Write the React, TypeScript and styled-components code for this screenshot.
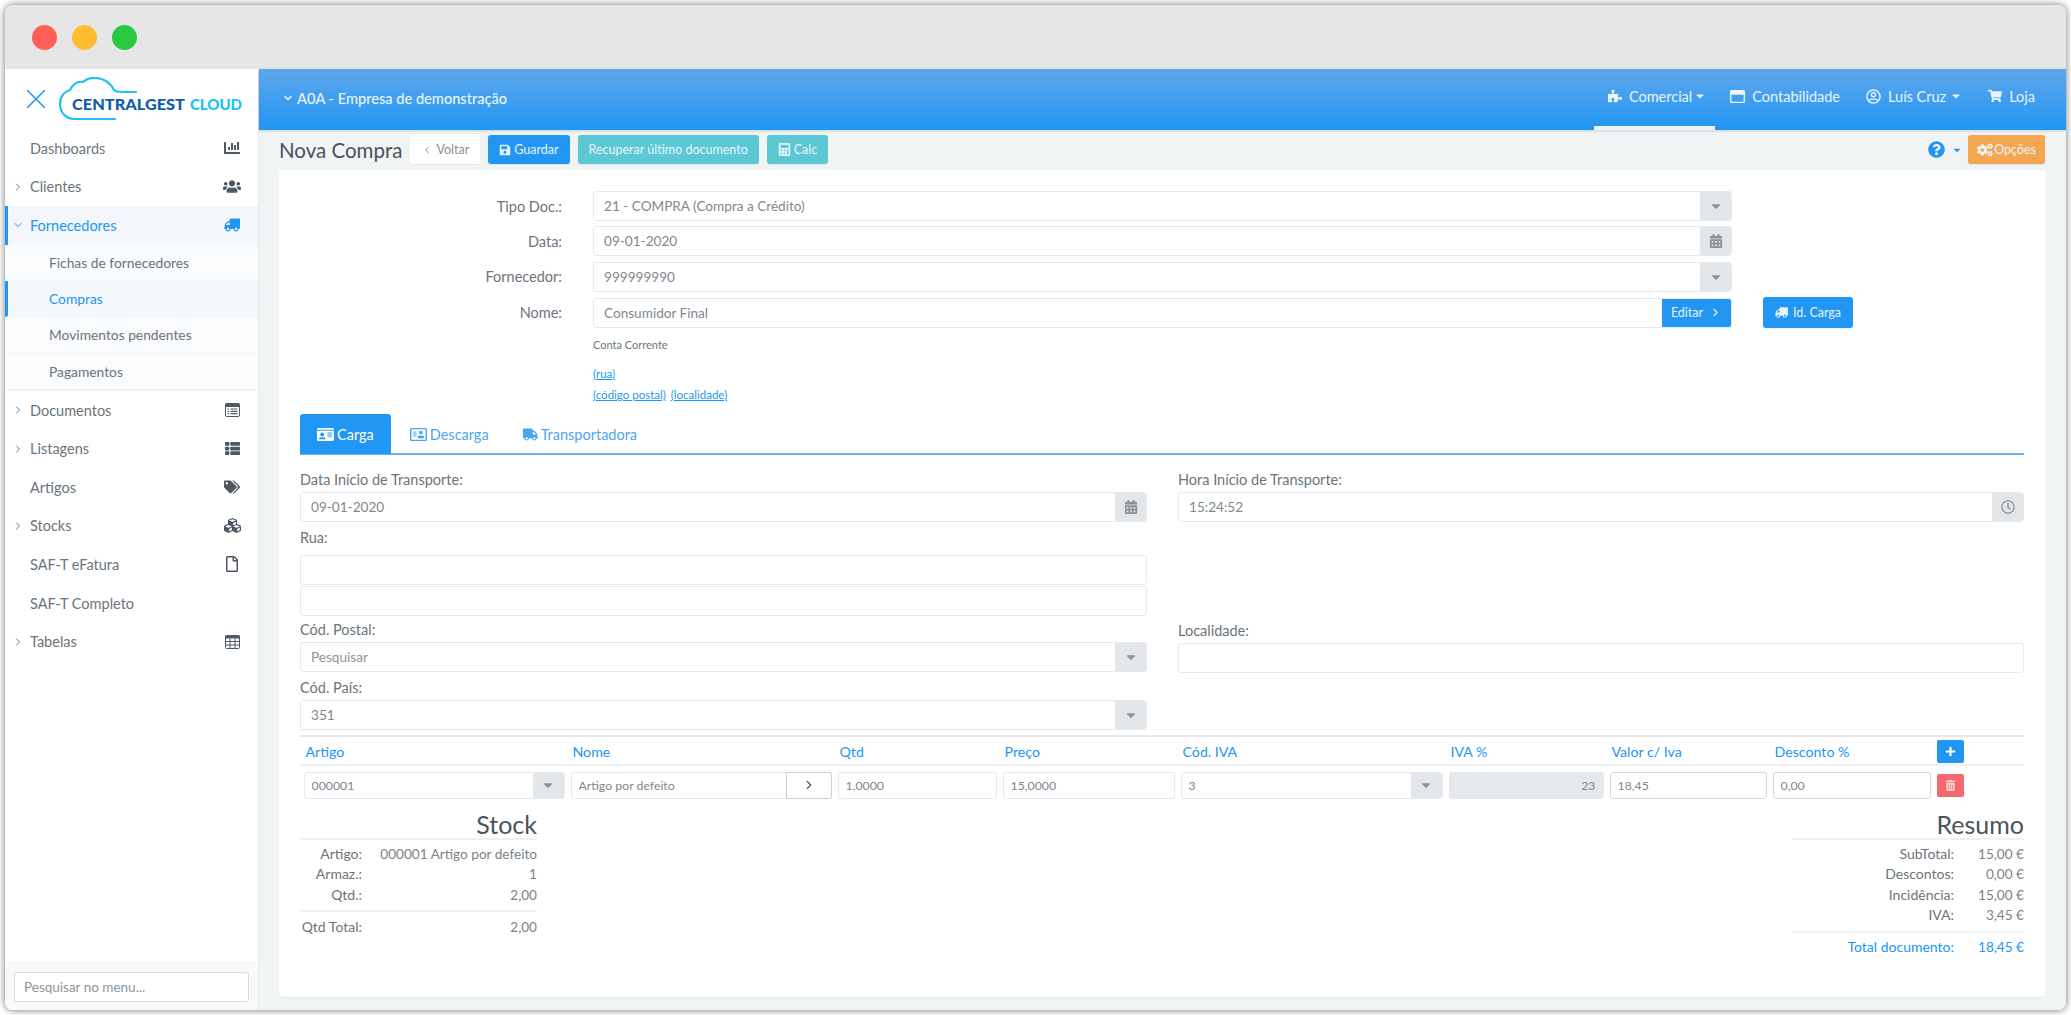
import React from 'react';
import styled, { createGlobalStyle } from 'styled-components';
import { ChevronDown, ChevronLeft, ChevronRight, X } from 'lucide-react';
import {
    FaCalculator,
    FaCalendarAlt,
    FaCaretDown,
    FaChartBar,
    FaCogs,
    FaCubes,
    FaIdCard,
    FaPlus,
    FaPuzzlePiece,
    FaQuestionCircle,
    FaRegAddressCard,
    FaRegClock,
    FaRegFile,
    FaRegUserCircle,
    FaRegWindowMaximize,
    FaSave,
    FaShoppingCart,
    FaTags,
    FaThList,
    FaTrashAlt,
    FaTruck,
    FaUsers,
} from 'react-icons/fa';

const BLUE = '#2196f3';
const FONT = 'Lato, "Open Sans", sans-serif';

const GlobalStyle = createGlobalStyle`
    html, body {
        margin: 0;
        padding: 0;
        background: #fff;
    }
    body {
        width: 2071px;
        height: 1015px;
        overflow: hidden;
        font-family: ${FONT};
        font-size: 14.5px;
        color: #6b747c;
    }
    * { box-sizing: border-box; }
`;

const Desktop = styled.div`
    width: 2071px;
    height: 1015px;
    padding: 5px;
`;

const Window = styled.div`
    width: 2061px;
    height: 1005px;
    display: flex;
    flex-direction: column;
    border-radius: 8px;
    overflow: hidden;
    box-shadow: 0 0 6px 1px rgba(0, 0, 0, 0.45);
`;

const TitleBar = styled.div`
    flex: 0 0 64px;
    display: flex;
    align-items: center;
    gap: 15px;
    padding: 5px 0 5px 27px;
    background: #e6e6e6;
`;

const TrafficLight = styled.span<{ $color: string }>`
    width: 25px;
    height: 25px;
    border-radius: 50%;
    background: ${({ $color }) => $color};
`;

const Body = styled.div`
    flex: 1;
    display: flex;
    min-height: 0;
`;

const Sidebar = styled.aside`
    flex: 0 0 254px;
    display: flex;
    flex-direction: column;
    background: #fff;
    border-right: 1px solid #e4e8ec;
`;

const LogoBar = styled.div`
    position: relative;
    flex: 0 0 60px;
    display: flex;
    align-items: center;
    gap: 6px;
    padding-left: 14px;
    background: #fff;
    color: ${BLUE};
    box-shadow: 0 1px 3px rgba(0, 0, 0, 0.12);
`;

const Menu = styled.nav`
    flex: 1;
`;

const MenuItem = styled.div<{ $active?: boolean }>`
    position: relative;
    height: 38.6px;
    display: flex;
    align-items: center;
    padding: 0 17px 0 22px;
    color: ${({ $active }) => ($active ? BLUE : '#6b747c')};
    background: ${({ $active }) => ($active ? '#f3f6fa' : '#fff')};
    border-left: ${({ $active }) => ($active ? `3px solid ${BLUE}` : '3px solid transparent')};
`;

const MenuArrow = styled.span`
    position: absolute;
    left: 4px;
    top: 50%;
    transform: translateY(-50%);
    display: flex;
    color: inherit;
`;

const MenuLabel = styled.span`
    flex: 1;
`;

const MenuIcon = styled.span<{ $flip?: boolean; $color?: string }>`
    width: 18px;
    display: flex;
    justify-content: center;
    font-size: 16px;
    color: ${({ $color }) => $color || '#4f5861'};
    transform: ${({ $flip }) => ($flip ? 'scaleX(-1)' : 'none')};
`;

const SubMenu = styled.div`
    background: #f9fbfc;
    border-bottom: 1px solid #f0f3f6;
`;

const SubItem = styled.div<{ $active?: boolean }>`
    height: 36.25px;
    display: flex;
    align-items: center;
    padding-left: 41px;
    color: ${({ $active }) => ($active ? BLUE : '#6b747c')};
    background: ${({ $active }) => ($active ? '#f5f8fb' : 'transparent')};
    border-left: ${({ $active }) => ($active ? `3px solid ${BLUE}` : '3px solid transparent')};
    border-bottom: 1px solid #f2f5f7;
    font-size: 13.8px;
`;

const MenuSearch = styled.div`
    flex: 0 0 47px;
    padding: 9px 9px 8px 9px;
    background: #f8f9fb;
    border-top: 1px solid #eef1f4;
`;

const MenuSearchInput = styled.input`
    width: 100%;
    height: 30px;
    padding: 0 9px;
    border: 1px solid #d5dade;
    border-radius: 3px;
    background: #fff;
    font: 13.5px ${FONT};
    color: #6b747c;
    &::placeholder { color: #8d959c; }
`;

const Main = styled.main`
    flex: 1;
    min-width: 0;
    display: flex;
    flex-direction: column;
    background: #f0f4f5;
`;

const Header = styled.header`
    flex: 0 0 61px;
    display: flex;
    align-items: center;
    justify-content: space-between;
    padding: 0 18px 0 23px;
    background: linear-gradient(180deg, #5fa7ec 0%, #2196f3 100%);
    color: #eaf4fd;
    box-shadow: 0 1px 3px rgba(0, 0, 0, 0.15);
`;

const CompanySelect = styled.div`
    display: flex;
    align-items: center;
    gap: 3px;
    font-size: 14.6px;
    font-weight: 500;
    margin-top: -3px;
`;

const NavBar = styled.div`
    display: flex;
    align-self: stretch;
`;

const NavItem = styled.div<{ $active?: boolean }>`
    position: relative;
    display: flex;
    align-items: center;
    gap: 7px;
    padding: 0 ${({ $active }) => ($active ? '9px' : '13px')} 7px ${({ $active }) => ($active ? '14px' : '13px')};
    margin-right: ${({ $active }) => ($active ? '2px' : '0')};
    font-size: 14.5px;
    svg { flex: none; }
    ${({ $active }) =>
        $active &&
        `
        &::after {
            content: '';
            position: absolute;
            left: 0;
            right: 0;
            bottom: 0;
            height: 4px;
            background: #eef3f7;
        }
    `}
`;

const NavCaret = styled(FaCaretDown)<{ $tight?: boolean }>`
    margin-left: ${({ $tight }) => ($tight ? '-5px' : '-3px')};
`;

const Toolbar = styled.div`
    flex: 0 0 40px;
    display: flex;
    align-items: center;
    gap: 8px;
    padding: 0 21px 1px 20px;
`;

const PageTitle = styled.h1`
    margin: 0;
    font-size: 20.5px;
    font-weight: 400;
    color: #4b535b;
`;

const ToolbarSpacer = styled.div`
    flex: 1;
`;

const Button = styled.button<{ $bg: string; $fg?: string; $dense?: boolean }>`
    height: 29px;
    display: inline-flex;
    align-items: center;
    justify-content: center;
    gap: ${({ $dense }) => ($dense ? 1 : 3)}px;
    padding: 0 ${({ $dense }) => ($dense ? 9 : 11)}px;
    border: 0;
    border-radius: 3px;
    font: 12.5px ${FONT};
    color: ${({ $fg }) => $fg || '#e8f4fb'};
    background: ${({ $bg }) => $bg};
    box-shadow: 0 1px 1px rgba(0, 0, 0, 0.06);
`;

const HelpMenu = styled.div`
    display: flex;
    align-items: center;
    gap: 7px;
    margin-right: -2px;
    color: ${BLUE};
`;

const Card = styled.section`
    flex: 1;
    margin: 0 21px 13px 20px;
    padding: 21px 21px 0 21px;
    background: #fff;
    border-radius: 4px;
    box-shadow: 0 1px 1px rgba(0, 0, 0, 0.05);
`;

const FormRow = styled.div`
    display: grid;
    grid-template-columns: 262px 1139px auto;
    column-gap: 31px;
    align-items: center;
    margin-bottom: 5.4px;
`;

const RowLabel = styled.label`
    text-align: right;
    color: #6b747c;
`;

const InputGroup = styled.div<{ $height?: number; $grow?: boolean }>`
    height: ${({ $height }) => $height || 30}px;
    display: flex;
    flex: ${({ $grow }) => ($grow ? 1 : 'none')};
    border: 1px solid #e6eaee;
    border-radius: 3px;
    overflow: hidden;
    background: #fff;
`;

const TextInput = styled.input<{ $small?: boolean; $right?: boolean }>`
    flex: 1;
    min-width: 0;
    height: 100%;
    padding: 0 ${({ $small }) => ($small ? 7 : 10)}px;
    border: 0;
    outline: 0;
    background: transparent;
    font: ${({ $small }) => ($small ? '12.3px' : '13.6px')} ${FONT};
    color: #80888f;
    text-align: ${({ $right }) => ($right ? 'right' : 'left')};
    &::placeholder { color: #8d959c; }
`;

const Addon = styled.span<{ $width?: number }>`
    flex: 0 0 ${({ $width }) => $width || 31}px;
    display: flex;
    align-items: center;
    justify-content: center;
    background: #e3e7e9;
    color: #8f9294;
    font-size: 14px;
`;

const EditButton = styled.button`
    flex: 0 0 69px;
    display: flex;
    align-items: center;
    justify-content: center;
    gap: 6px;
    border: 0;
    background: ${BLUE};
    color: #e8f4fd;
    font: 12.5px ${FONT};
`;

const CargoButton = styled(Button)`
    width: 90px;
    height: 31px;
    gap: 5px;
    padding: 0;
`;

const FlippedTruck = styled(FaTruck)`
    transform: scaleX(-1);
`;

const AddressBlock = styled.div`
    margin: 10px 0 0 293px;
    height: 76px;
    display: flex;
    flex-direction: column;
    font-size: 11px;
    color: #6f777e;
`;

const AddressLine = styled.div<{ $top: number }>`
    display: flex;
    gap: 5px;
    font-size: 11.5px;
    margin-top: ${({ $top }) => $top}px;
`;

const AddressLink = styled.a`
    color: ${BLUE};
    text-decoration: underline;
`;

const Tabs = styled.div`
    display: flex;
    height: 41px;
    border-bottom: 2px solid #66b6f6;
`;

const Tab = styled.div<{ $active?: boolean }>`
    display: flex;
    align-items: center;
    gap: 3px;
    padding: 0 17px;
    margin-right: ${({ $active }) => ($active ? 2 : 0)}px;
    height: 40px;
    font-size: 14.5px;
    color: ${({ $active }) => ($active ? '#fff' : '#4ba6f2')};
    background: ${({ $active }) => ($active ? BLUE : 'transparent')};
    border-radius: 3px 3px 0 0;
`;

const FlippedCard = styled(FaRegAddressCard)`
    transform: scaleX(-1);
`;

const FieldGrid = styled.div`
    display: grid;
    grid-template-columns: 847px 846px;
    column-gap: 31px;
    margin-top: 15px;
`;

const Field = styled.div`
    min-width: 0;
`;

const FieldLabel = styled.div`
    height: 20px;
    line-height: 20px;
    margin-bottom: 2px;
    color: #6b747c;
`;

const StackedInputs = styled.div`
    display: flex;
    flex-direction: column;
    gap: 1px;
    margin-top: 7px;
`;

const FieldGap = styled.div<{ $size: number }>`
    height: ${({ $size }) => $size}px;
`;

const LinesTable = styled.div`
    margin-top: 5px;
    border-top: 2px solid #e6eaee;
`;

const LineRow = styled.div<{ $head?: boolean }>`
    display: grid;
    grid-template-columns: 261px 261px 159px 172px 262px 155px 157px 158px 27px;
    column-gap: 6px;
    align-items: center;
    padding-left: 3.5px;
    padding-top: ${({ $head }) => ($head ? '3px' : '0')};
    height: ${({ $head }) => ($head ? '29px' : '39px')};
    border-bottom: ${({ $head }) => ($head ? '2px solid #eef1f3' : '0')};
`;

const LineHead = styled.div`
    padding-left: 2px;
    color: ${BLUE};
    font-size: 14.2px;
`;

const NameCell = styled.div`
    display: flex;
`;

const NameGo = styled.button`
    flex: 0 0 46px;
    height: 27px;
    display: flex;
    align-items: center;
    justify-content: center;
    margin-left: -1px;
    border: 1px solid #c9ced2;
    border-radius: 0 3px 3px 0;
    background: #fff;
    color: #555;
`;

const EditableGroup = styled(InputGroup)`
    border: 1px solid #d3d8dc;
`;

const DisabledGroup = styled(InputGroup)`
    border: 1px solid #e6e9ec;
    background: #e6e9ec;
`;

const IconButton = styled.button<{ $bg: string; $fg?: string }>`
    width: 27px;
    height: 23px;
    display: flex;
    align-items: center;
    justify-content: center;
    padding: 0;
    border: 0;
    border-radius: 2px;
    font-size: 11px;
    background: ${({ $bg }) => $bg};
    color: ${({ $fg }) => $fg || '#fff'};
`;

const Totals = styled.div`
    display: flex;
    justify-content: space-between;
    align-items: flex-start;
    margin-top: 5px;
`;

const TotalsBox = styled.div<{ $width: number }>`
    width: ${({ $width }) => $width}px;
`;

const TotalsTitle = styled.h3`
    margin: 0;
    height: 28px;
    line-height: 28px;
    text-align: right;
    font-size: 25px;
    font-weight: 400;
    color: #4b535b;
    border-bottom: 2px solid #eff2f4;
    box-sizing: content-box;
`;

const TotalsRows = styled.div<{ $valueWidth: string; $labelWidth: string }>`
    display: grid;
    grid-template-columns: ${({ $labelWidth, $valueWidth }) => `${$labelWidth} ${$valueWidth}`};
    text-align: right;
    line-height: 20.3px;
    padding: 4px 0 5.5px;
    color: #7a8289;
    font-size: 14px;
    & + & {
        border-top: 2px solid #eff2f4;
        padding-top: 4.5px;
    }
`;

const TotalsLabel = styled.div<{ $accent?: boolean }>`
    color: ${({ $accent }) => ($accent ? BLUE : '#6b747c')};
`;

const TotalsValue = styled.div<{ $accent?: boolean }>`
    color: ${({ $accent }) => ($accent ? BLUE : '#7a8289')};
    font-size: 13.6px;
`;

function CentralgestLogo() {
    return (
        <svg width="185" height="45" viewBox="0 0 185 45">
            <path
                d="M56 42 H16 C6 42 1 35 1 27 C1 19 6 14 11 13 C14 7 19 4 24 5 C28 1 33 0.5 38 1 C47 2 52 7 55 13 C57 15 60 15 77 15"
                fill="none"
                stroke="#19c3f5"
                strokeWidth="2.2"
                strokeLinecap="round"
            />
            <text x="13" y="33" fontFamily="Lato, sans-serif" fontWeight="900" fontSize="15.5" fill="#0f5da8" textLength="113" lengthAdjust="spacingAndGlyphs">
                CENTRALGEST
            </text>
            <text x="131" y="33" fontFamily="Lato, sans-serif" fontWeight="900" fontSize="15.5" fill="#19c3f5" textLength="52" lengthAdjust="spacingAndGlyphs">
                CLOUD
            </text>
        </svg>
    );
}

function ListAltGlyph() {
    return (
        <svg width="15" height="14" viewBox="0 0 15 14" fill="none">
            <rect x="0.5" y="0.5" width="14" height="13" rx="1.5" stroke="currentColor" />
            <rect x="0.5" y="0.5" width="14" height="3.5" fill="currentColor" />
            <path d="M2.5 6H4M2.5 8.3H4M2.5 10.6H4M5.5 6H12.5M5.5 8.3H12.5M5.5 10.6H12.5" stroke="currentColor" strokeWidth="1.2" />
        </svg>
    );
}

function TableGlyph() {
    return (
        <svg width="15" height="14" viewBox="0 0 15 14" fill="none">
            <rect x="0.5" y="0.5" width="14" height="13" rx="1" stroke="currentColor" />
            <rect x="0.5" y="0.5" width="14" height="3" fill="currentColor" />
            <path d="M0.5 6.5H14.5M0.5 10H14.5M5 3.5V13.5M10 3.5V13.5" stroke="currentColor" />
        </svg>
    );
}

type MenuEntry = {
    label: string;
    arrow?: boolean;
    icon?: React.ReactNode;
};

const topMenu: MenuEntry[] = [
    { label: 'Dashboards', icon: <FaChartBar /> },
    { label: 'Clientes', arrow: true, icon: <FaUsers size={19} /> },
];

const bottomMenu: MenuEntry[] = [
    { label: 'Documentos', arrow: true, icon: <ListAltGlyph /> },
    { label: 'Listagens', arrow: true, icon: <FaThList size={15} /> },
    { label: 'Artigos', icon: <FaTags /> },
    { label: 'Stocks', arrow: true, icon: <FaCubes size={17} /> },
    { label: 'SAF-T eFatura', icon: <FaRegFile /> },
    { label: 'SAF-T Completo' },
    { label: 'Tabelas', arrow: true, icon: <TableGlyph /> },
];

const subMenu = ['Fichas de fornecedores', 'Compras', 'Movimentos pendentes', 'Pagamentos'];

const renderEntry = (entry: MenuEntry) => (
    <MenuItem key={entry.label}>
        {entry.arrow && (
            <MenuArrow>
                <ChevronRight size={12} />
            </MenuArrow>
        )}
        <MenuLabel>{entry.label}</MenuLabel>
        {entry.icon && <MenuIcon>{entry.icon}</MenuIcon>}
    </MenuItem>
);

const lineHeads = ['Artigo', 'Nome', 'Qtd', 'Preço', 'Cód. IVA', 'IVA %', 'Valor c/ Iva', 'Desconto %'];

export default function App() {
    return (
        <Desktop>
            <GlobalStyle />
            <Window>
                <TitleBar>
                    <TrafficLight $color="#ff5f57" />
                    <TrafficLight $color="#febc2e" />
                    <TrafficLight $color="#28c840" />
                </TitleBar>
                <Body>
                    <Sidebar>
                        <LogoBar>
                            <X size={34} strokeWidth={1.1} />
                            <CentralgestLogo />
                        </LogoBar>
                        <Menu>
                            {topMenu.map(renderEntry)}
                            <MenuItem $active>
                                <MenuArrow>
                                    <ChevronDown size={12} />
                                </MenuArrow>
                                <MenuLabel>Fornecedores</MenuLabel>
                                <MenuIcon $color={BLUE} $flip>
                                    <FaTruck />
                                </MenuIcon>
                            </MenuItem>
                            <SubMenu>
                                {subMenu.map((item) => (
                                    <SubItem key={item} $active={item === 'Compras'}>
                                        {item}
                                    </SubItem>
                                ))}
                            </SubMenu>
                            {bottomMenu.map(renderEntry)}
                        </Menu>
                        <MenuSearch>
                            <MenuSearchInput placeholder="Pesquisar no menu..." />
                        </MenuSearch>
                    </Sidebar>
                    <Main>
                        <Header>
                            <CompanySelect>
                                <ChevronDown size={12} strokeWidth={3} />
                                A0A - Empresa de demonstração
                            </CompanySelect>
                            <NavBar>
                                <NavItem $active>
                                    <FaPuzzlePiece size={14} />
                                    Comercial
                                    <NavCaret size={12} $tight />
                                </NavItem>
                                <NavItem>
                                    <FaRegWindowMaximize size={15} />
                                    Contabilidade
                                </NavItem>
                                <NavItem>
                                    <FaRegUserCircle size={15} />
                                    Luís Cruz
                                    <NavCaret size={12} />
                                </NavItem>
                                <NavItem>
                                    <FaShoppingCart size={14} />
                                    Loja
                                </NavItem>
                            </NavBar>
                        </Header>
                        <Toolbar>
                            <PageTitle>Nova Compra</PageTitle>
                            <Button $bg="#fff" $fg="#8a9299">
                                <ChevronLeft size={12} />
                                Voltar
                            </Button>
                            <Button $bg={BLUE}>
                                <FaSave size={12} />
                                Guardar
                            </Button>
                            <Button $bg="#5bc8d4">Recuperar último documento</Button>
                            <Button $bg="#5bc8d4">
                                <FaCalculator size={13} />
                                Calc
                            </Button>
                            <ToolbarSpacer />
                            <HelpMenu>
                                <FaQuestionCircle size={17} />
                                <FaCaretDown size={10} />
                            </HelpMenu>
                            <Button $bg="#f4a651" $dense>
                                <FaCogs size={16} />
                                Opções
                            </Button>
                        </Toolbar>
                        <Card>
                            <FormRow>
                                <RowLabel>Tipo Doc.:</RowLabel>
                                <InputGroup>
                                    <TextInput readOnly value="21 - COMPRA (Compra a Crédito)" />
                                    <Addon>
                                        <FaCaretDown />
                                    </Addon>
                                </InputGroup>
                            </FormRow>
                            <FormRow>
                                <RowLabel>Data:</RowLabel>
                                <InputGroup>
                                    <TextInput readOnly value="09-01-2020" />
                                    <Addon>
                                        <FaCalendarAlt />
                                    </Addon>
                                </InputGroup>
                            </FormRow>
                            <FormRow>
                                <RowLabel>Fornecedor:</RowLabel>
                                <InputGroup>
                                    <TextInput readOnly value="999999990" />
                                    <Addon>
                                        <FaCaretDown />
                                    </Addon>
                                </InputGroup>
                            </FormRow>
                            <FormRow>
                                <RowLabel>Nome:</RowLabel>
                                <InputGroup>
                                    <TextInput readOnly value="Consumidor Final" />
                                    <EditButton>
                                        Editar
                                        <ChevronRight size={13} />
                                    </EditButton>
                                </InputGroup>
                                <CargoButton $bg={BLUE}>
                                    <FlippedTruck size={13} />
                                    Id. Carga
                                </CargoButton>
                            </FormRow>
                            <AddressBlock>
                                <div>Conta Corrente</div>
                                <AddressLine $top={16}>
                                    <AddressLink>(rua)</AddressLink>
                                </AddressLine>
                                <AddressLine $top={8}>
                                    <AddressLink>(código postal)</AddressLink>
                                    <AddressLink>(localidade)</AddressLink>
                                </AddressLine>
                            </AddressBlock>
                            <Tabs>
                                <Tab $active>
                                    <FaIdCard size={17} />
                                    Carga
                                </Tab>
                                <Tab>
                                    <FlippedCard size={17} />
                                    Descarga
                                </Tab>
                                <Tab>
                                    <FaTruck size={15} />
                                    Transportadora
                                </Tab>
                            </Tabs>
                            <FieldGrid>
                                <Field>
                                    <FieldLabel>Data Início de Transporte:</FieldLabel>
                                    <InputGroup>
                                        <TextInput readOnly value="09-01-2020" />
                                        <Addon>
                                            <FaCalendarAlt />
                                        </Addon>
                                    </InputGroup>
                                    <FieldGap $size={5.8} />
                                    <FieldLabel>Rua:</FieldLabel>
                                    <StackedInputs>
                                        <InputGroup>
                                            <TextInput readOnly value="" />
                                        </InputGroup>
                                        <InputGroup>
                                            <TextInput readOnly value="" />
                                        </InputGroup>
                                    </StackedInputs>
                                    <FieldGap $size={4.5} />
                                    <FieldLabel>Cód. Postal:</FieldLabel>
                                    <InputGroup>
                                        <TextInput readOnly placeholder="Pesquisar" />
                                        <Addon>
                                            <FaCaretDown />
                                        </Addon>
                                    </InputGroup>
                                    <FieldGap $size={5.5} />
                                    <FieldLabel>Cód. País:</FieldLabel>
                                    <InputGroup>
                                        <TextInput readOnly value="351" />
                                        <Addon>
                                            <FaCaretDown />
                                        </Addon>
                                    </InputGroup>
                                </Field>
                                <Field>
                                    <FieldLabel>Hora Início de Transporte:</FieldLabel>
                                    <InputGroup>
                                        <TextInput readOnly value="15:24:52" />
                                        <Addon>
                                            <FaRegClock />
                                        </Addon>
                                    </InputGroup>
                                    <FieldGap $size={98.5} />
                                    <FieldLabel>Localidade:</FieldLabel>
                                    <InputGroup>
                                        <TextInput readOnly value="" />
                                    </InputGroup>
                                </Field>
                            </FieldGrid>
                            <LinesTable>
                                <LineRow $head>
                                    {lineHeads.map((head) => (
                                        <LineHead key={head}>{head}</LineHead>
                                    ))}
                                    <IconButton $bg={BLUE}>
                                        <FaPlus />
                                    </IconButton>
                                </LineRow>
                                <LineRow>
                                    <InputGroup $height={27}>
                                        <TextInput $small readOnly value="000001" />
                                        <Addon $width={31}>
                                            <FaCaretDown />
                                        </Addon>
                                    </InputGroup>
                                    <NameCell>
                                        <InputGroup $height={27} $grow>
                                            <TextInput $small readOnly value="Artigo por defeito" />
                                        </InputGroup>
                                        <NameGo>
                                            <ChevronRight size={14} />
                                        </NameGo>
                                    </NameCell>
                                    <InputGroup $height={27}>
                                        <TextInput $small readOnly value="1,0000" />
                                    </InputGroup>
                                    <InputGroup $height={27}>
                                        <TextInput $small readOnly value="15,0000" />
                                    </InputGroup>
                                    <InputGroup $height={27}>
                                        <TextInput $small readOnly value="3" />
                                        <Addon $width={31}>
                                            <FaCaretDown />
                                        </Addon>
                                    </InputGroup>
                                    <DisabledGroup $height={27}>
                                        <TextInput $small $right readOnly value="23" />
                                    </DisabledGroup>
                                    <EditableGroup $height={27}>
                                        <TextInput $small readOnly value="18,45" />
                                    </EditableGroup>
                                    <EditableGroup $height={27}>
                                        <TextInput $small readOnly value="0,00" />
                                    </EditableGroup>
                                    <IconButton $bg="#f4696e" $fg="#fbd5d6">
                                        <FaTrashAlt />
                                    </IconButton>
                                </LineRow>
                            </LinesTable>
                            <Totals>
                                <TotalsBox $width={237}>
                                    <TotalsTitle>Stock</TotalsTitle>
                                    <TotalsRows $labelWidth="62px" $valueWidth="175px">
                                        <TotalsLabel>Artigo:</TotalsLabel>
                                        <TotalsValue>000001 Artigo por defeito</TotalsValue>
                                        <TotalsLabel>Armaz.:</TotalsLabel>
                                        <TotalsValue>1</TotalsValue>
                                        <TotalsLabel>Qtd.:</TotalsLabel>
                                        <TotalsValue>2,00</TotalsValue>
                                    </TotalsRows>
                                    <TotalsRows $labelWidth="62px" $valueWidth="175px">
                                        <TotalsLabel>Qtd Total:</TotalsLabel>
                                        <TotalsValue>2,00</TotalsValue>
                                    </TotalsRows>
                                </TotalsBox>
                                <TotalsBox $width={232}>
                                    <TotalsTitle>Resumo</TotalsTitle>
                                    <TotalsRows $labelWidth="162px" $valueWidth="70px">
                                        <TotalsLabel>SubTotal:</TotalsLabel>
                                        <TotalsValue>15,00 €</TotalsValue>
                                        <TotalsLabel>Descontos:</TotalsLabel>
                                        <TotalsValue>0,00 €</TotalsValue>
                                        <TotalsLabel>Incidência:</TotalsLabel>
                                        <TotalsValue>15,00 €</TotalsValue>
                                        <TotalsLabel>IVA:</TotalsLabel>
                                        <TotalsValue>3,45 €</TotalsValue>
                                    </TotalsRows>
                                    <TotalsRows $labelWidth="162px" $valueWidth="70px">
                                        <TotalsLabel $accent>Total documento:</TotalsLabel>
                                        <TotalsValue $accent>18,45 €</TotalsValue>
                                    </TotalsRows>
                                </TotalsBox>
                            </Totals>
                        </Card>
                    </Main>
                </Body>
            </Window>
        </Desktop>
    );
}
